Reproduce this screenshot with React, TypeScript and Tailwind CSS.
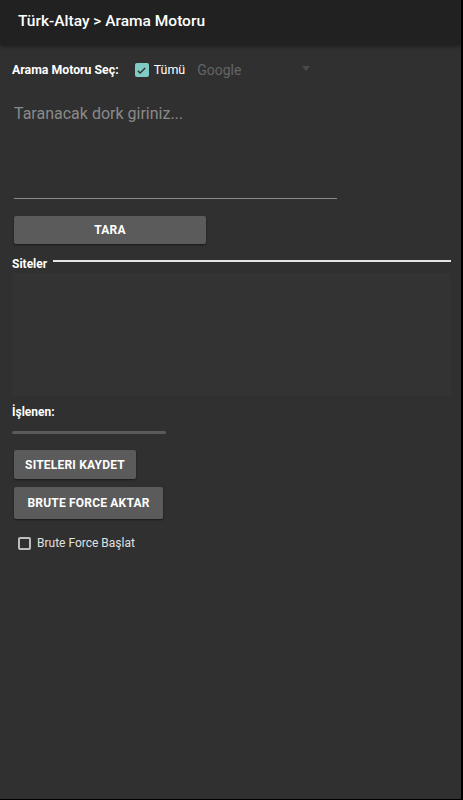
function Btn({ label, className }: { label: string; className: string }) {
  return (
    <button
      className={`bg-[#5b5b5b] text-white text-[12px] font-bold tracking-[0.2px] rounded-[2px] shadow-[0_1px_2px_rgba(0,0,0,0.5)] ${className}`}
    >
      {label}
    </button>
  );
}

export default function App() {
  return (
    <div
      className="w-[463px] h-[800px] bg-[#303030] flex flex-col border-r-2 border-b border-black overflow-hidden"
      style={{ fontFamily: "Roboto, 'Noto Sans', sans-serif" }}
    >
      {/* toolbar */}
      <div className="h-[44px] shrink-0 bg-[#212121] flex items-center pl-[18px] shadow-[0_2px_4px_rgba(0,0,0,0.45)] relative z-10">
        <span className="text-white text-[15.5px] font-medium">Türk-Altay &gt; Arama Motoru</span>
      </div>

      <div className="flex flex-col pl-[12px] pr-[12px]">
        {/* search engine row */}
        <div className="flex items-center h-[26px] mt-[13px]">
          <span className="text-white text-[12.3px] font-bold">Arama Motoru Seç:</span>
          <span className="ml-[16px] w-[14px] h-[14px] rounded-[2px] bg-[#80cbc4] flex items-center justify-center">
            <svg width="11" height="11" viewBox="0 0 24 24" fill="none" stroke="#303030" strokeWidth={3}>
              <path d="M4 12.5l5 5L20 6.5" />
            </svg>
          </span>
          <span className="ml-[5px] text-white text-[12.5px]">Tümü</span>
          <span className="ml-[12px] text-[#646464] text-[14px]">Google</span>
          <svg className="ml-[61px] -mt-[4px]" width="8" height="5" viewBox="0 0 8 5">
            <path d="M0 0h8L4 5z" fill="#4a4a4a" />
          </svg>
        </div>

        {/* dork input */}
        <div className="mt-[31px] ml-[2px] w-[323px] h-[85px] border-b border-[#8a8a8a]">
          <div className="text-[#8a8a8a] text-[16px] leading-[20px] -mt-[10px]">Taranacak dork giriniz...</div>
        </div>

        <Btn label="TARA" className="mt-[17px] ml-[2px] w-[192px] h-[28px]" />

        {/* siteler header */}
        <div className="relative mt-[14px] h-[12px] -mr-[2px]">
          <div className="absolute left-[41px] right-0 top-[2px] h-[2px] bg-[#e6e6e6]" />
          <span className="absolute left-0 top-[-1px] text-white text-[12px] font-bold leading-[14px]">Siteler</span>
        </div>

        <div className="mt-[3px] -mr-[2px] h-[123px] bg-[#333333]" />

        <div className="mt-[9px] text-white text-[12px] font-bold leading-[14px]">İşlenen:</div>

        <div className="mt-[12px] w-[154px] h-[3px] rounded-full bg-[#5a5a5a]" />

        <Btn label="SITELERI KAYDET" className="mt-[16px] ml-[2px] w-[122px] h-[29px]" />
        <Btn label="BRUTE FORCE AKTAR" className="mt-[8px] ml-[2px] w-[149px] h-[32px]" />

        <div className="mt-[15px] ml-[6px] flex items-center">
          <span className="w-[13px] h-[13px] rounded-[2px] border-2 border-[#bdbdbd]" />
          <span className="ml-[6px] text-[#e0e0e0] text-[12px]">Brute Force Başlat</span>
        </div>
      </div>
    </div>
  );
}
